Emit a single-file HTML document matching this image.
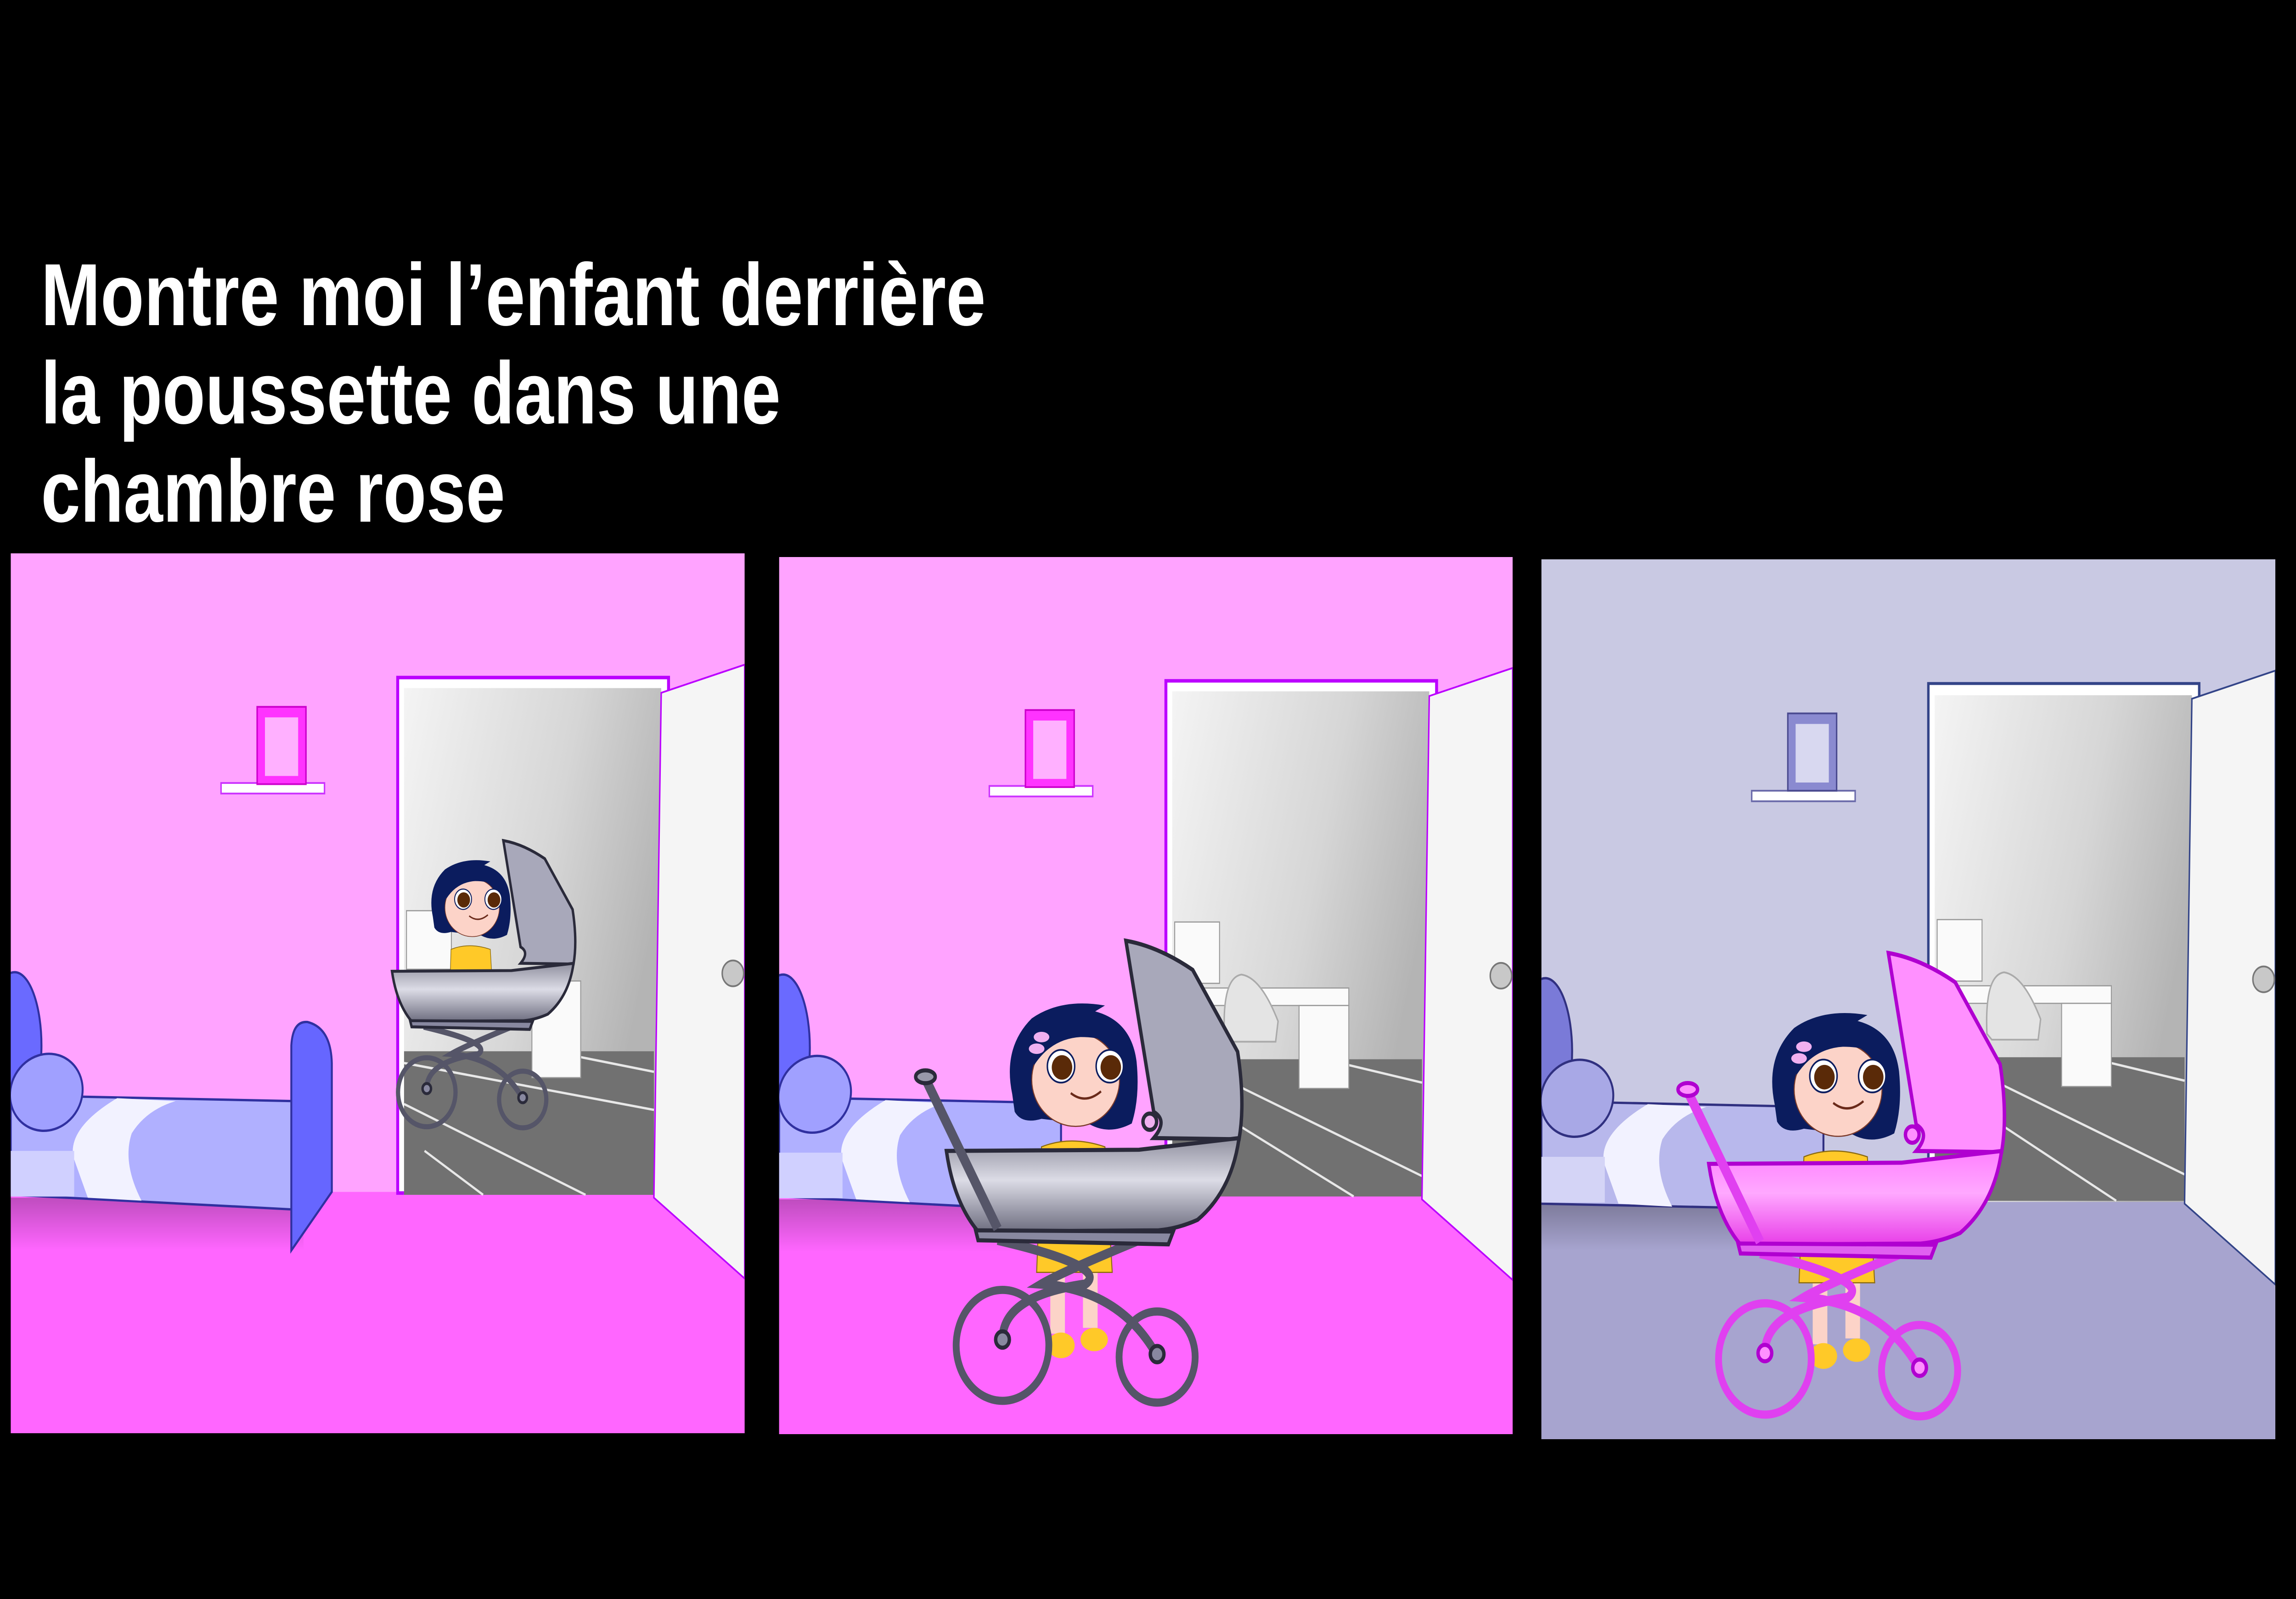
<!DOCTYPE html>
<html><head><meta charset="utf-8"><style>
html,body{margin:0;padding:0;background:#000;overflow:hidden;}
#root{display:block;width:100vw;height:100vh;}
</style></head><body>
<svg id="root" viewBox="0 0 6000 3482" preserveAspectRatio="none">
<defs>
<linearGradient id="room" x1="0" y1="0" x2="1" y2="0.4"><stop offset="0" stop-color="#f4f4f4"/><stop offset="0.6" stop-color="#d6d6d6"/><stop offset="1" stop-color="#b4b4b4"/></linearGradient>
<linearGradient id="gray" x1="0" y1="0" x2="0" y2="1"><stop offset="0" stop-color="#8f8f9e"/><stop offset="0.45" stop-color="#dcdce6"/><stop offset="1" stop-color="#6e6e80"/></linearGradient>
<linearGradient id="pink" x1="0" y1="0" x2="0" y2="1"><stop offset="0" stop-color="#ff80ff"/><stop offset="0.45" stop-color="#ffa8ff"/><stop offset="1" stop-color="#e83ee8"/></linearGradient>
<linearGradient id="shadow" x1="0" y1="0" x2="0" y2="1"><stop offset="0" stop-color="#000" stop-opacity="0.25"/><stop offset="1" stop-color="#000" stop-opacity="0"/></linearGradient>
</defs>
<rect width="6000" height="3482" fill="#000"/>
<g font-family="'Liberation Sans',sans-serif" font-weight="bold" font-size="192" fill="#fff">
<text x="107" y="708" textLength="2469" lengthAdjust="spacingAndGlyphs">Montre moi l’enfant derrière</text>
<text x="107" y="922" textLength="1933" lengthAdjust="spacingAndGlyphs">la poussette dans une</text>
<text x="107" y="1136" textLength="1213" lengthAdjust="spacingAndGlyphs">chambre rose</text>
</g>

<!-- PANEL 1 -->
<svg x="28" y="1205" width="1918" height="1916" viewBox="22 20 1504 1502" preserveAspectRatio="none">
<rect x="22" y="20" width="1504" height="1502" fill="#ffa3ff"/>
<polygon points="22,1110 1340,1110 1526,1258 1526,1522 22,1522" fill="#ff66ff"/>
<rect x="815" y="232" width="555" height="880" fill="#fff" stroke="#bb00ff" stroke-width="6"/>
<rect x="828" y="250" width="527" height="865" fill="url(#room)"/>
<polygon points="828,870 1340,870 1340,1115 828,1115" fill="#717171"/>
<g stroke="#e8e8e8" stroke-width="4"><line x1="828" y1="890" x2="1340" y2="970"/><line x1="828" y1="960" x2="1200" y2="1115"/><line x1="870" y1="1040" x2="990" y2="1115"/><line x1="1190" y1="880" x2="1340" y2="905"/></g>
<rect x="833" y="630" width="92" height="100" fill="#fafafa" stroke="#999" stroke-width="2"/>
<rect x="1090" y="750" width="100" height="165" fill="#fafafa" stroke="#999" stroke-width="2"/>
<polygon points="1355,258 1526,210 1526,1258 1340,1120" fill="#f5f5f5" stroke="#bb00ff" stroke-width="3"/>
<circle cx="1502" cy="737" r="22" fill="#c8c8c8" stroke="#777" stroke-width="3"/>
<rect x="453" y="412" width="212" height="18" fill="#fff" stroke="#cc33ff" stroke-width="3"/>
<rect x="527" y="282" width="100" height="132" fill="#ff33ff" stroke="#cc00cc" stroke-width="3"/>
<rect x="543" y="300" width="68" height="100" fill="#ffb0ff"/>
<rect x="22" y="1120" width="600" height="90" fill="url(#shadow)"/>
<ellipse cx="30" cy="860" rx="55" ry="125" fill="#6a6aff" stroke="#3030a0" stroke-width="4"/>
<polygon points="22,945 600,955 600,1140 22,1115" fill="#b0b0ff" stroke="#3030a0" stroke-width="4"/>
<path d="M240,950 Q140,1000 150,1050 L180,1120 L290,1125 Q250,1060 270,1010 Q300,970 360,955 Z" fill="#f2f2ff"/>
<rect x="22" y="1040" width="130" height="78" fill="#d0d0ff"/>
<ellipse cx="95" cy="940" rx="75" ry="65" fill="#a0a0ff" stroke="#3030a0" stroke-width="4" transform="rotate(-15 95 940)"/>
<path d="M597,1210 L597,860 Q600,818 630,820 Q678,830 680,890 L680,1110 Z" fill="#6666ff" stroke="#3030a0" stroke-width="4"/>
<g transform="translate(577,45) scale(0.62)">
<path d="M500,960 Q480,880 540,830 Q600,795 690,808 L670,818 Q745,835 755,905 Q762,965 745,1010 Q700,1030 660,1012 L560,1002 Q520,1012 505,990 Z" fill="#0b1c5e"/>
<path d="M560,1050 Q620,1030 690,1050 L700,1200 L555,1200 Z" fill="#ffc928" stroke="#8a6a10" stroke-width="2"/>
<ellipse cx="630" cy="935" rx="90" ry="80" fill="#fcd3c8" stroke="#7a3a2a" stroke-width="2"/>
<path d="M540,890 Q590,822 700,830 Q745,850 755,905 Q720,862 640,862 Q580,865 545,910 Z" fill="#0b1c5e"/>
<circle cx="600" cy="912" r="28" fill="#fff" stroke="#0b1c5e" stroke-width="3"/><circle cx="602" cy="914" r="21" fill="#5a2a08"/>
<circle cx="700" cy="912" r="28" fill="#fff" stroke="#0b1c5e" stroke-width="3"/><circle cx="702" cy="914" r="21" fill="#5a2a08"/>
<path d="M620,958 Q650,978 682,955" fill="none" stroke="#6a2a1a" stroke-width="4"/>
</g>
<g transform="translate(577,75) scale(0.62)" stroke="#2a2a3a" stroke-width="8">
<g fill="none" stroke="#555568" stroke-width="16"><path d="M470,1215 Q700,1260 650,1290 Q480,1310 480,1385"/><path d="M760,1215 Q600,1270 560,1290 Q720,1300 795,1410"/></g>
<circle cx="480" cy="1395" r="95" fill="none" stroke="#555568" stroke-width="14"/>
<circle cx="797" cy="1415" r="78" fill="none" stroke="#555568" stroke-width="14"/>
<circle cx="480" cy="1385" r="14" fill="#8888a0"/><circle cx="797" cy="1410" r="14" fill="#8888a0"/>
<path d="M733,702 Q800,712 870,752 L962,892 Q978,980 965,1042 L790,1040 Q820,1010 790,995 Z" fill="#a8a8ba"/>
<path d="M365,1062 L760,1060 L965,1040 Q950,1130 880,1180 Q840,1195 800,1198 L430,1200 Q380,1150 365,1062 Z" fill="url(#gray)"/>
<path d="M425,1198 L830,1200 L820,1222 L430,1215 Z" fill="#8888a0"/>
</g>
</svg>

<!-- PANEL 2 -->
<svg x="2036" y="1213" width="1917" height="1910" viewBox="22 20 1504 1502" preserveAspectRatio="none">
<rect x="22" y="20" width="1504" height="1502" fill="#ffa3ff"/>
<polygon points="22,1110 1340,1110 1526,1258 1526,1522 22,1522" fill="#ff66ff"/>
<rect x="815" y="232" width="555" height="880" fill="#fff" stroke="#bb00ff" stroke-width="6"/>
<rect x="828" y="250" width="527" height="865" fill="url(#room)"/>
<polygon points="828,880 1340,880 1340,1115 828,1115" fill="#717171"/>
<g stroke="#e8e8e8" stroke-width="4"><line x1="900" y1="900" x2="1340" y2="1080"/><line x1="900" y1="960" x2="1200" y2="1115"/><line x1="1190" y1="890" x2="1340" y2="920"/></g>
<rect x="833" y="645" width="92" height="105" fill="#fafafa" stroke="#999" stroke-width="2"/>
<rect x="870" y="758" width="320" height="30" fill="#fafafa" stroke="#999" stroke-width="2"/>
<rect x="1088" y="788" width="102" height="142" fill="#fafafa" stroke="#999" stroke-width="2"/>
<path d="M935,840 Q930,740 970,735 Q1010,740 1045,815 L1040,850 L945,850 Z" fill="#e4e4e4" stroke="#aaa" stroke-width="3"/>
<polygon points="1355,258 1526,210 1526,1258 1340,1120" fill="#f5f5f5" stroke="#bb00ff" stroke-width="3"/>
<circle cx="1502" cy="737" r="22" fill="#c8c8c8" stroke="#777" stroke-width="3"/>
<rect x="453" y="412" width="212" height="18" fill="#fff" stroke="#cc33ff" stroke-width="3"/>
<rect x="527" y="282" width="100" height="132" fill="#ff33ff" stroke="#cc00cc" stroke-width="3"/>
<rect x="543" y="300" width="68" height="100" fill="#ffb0ff"/>
<rect x="22" y="1120" width="600" height="90" fill="url(#shadow)"/>
<ellipse cx="30" cy="860" rx="55" ry="125" fill="#6a6aff" stroke="#3030a0" stroke-width="4"/>
<polygon points="22,945 600,955 600,1140 22,1115" fill="#b0b0ff" stroke="#3030a0" stroke-width="4"/>
<path d="M240,950 Q140,1000 150,1050 L180,1120 L290,1125 Q250,1060 270,1010 Q300,970 360,955 Z" fill="#f2f2ff"/>
<rect x="22" y="1040" width="130" height="78" fill="#d0d0ff"/>
<ellipse cx="95" cy="940" rx="75" ry="65" fill="#a0a0ff" stroke="#3030a0" stroke-width="4" transform="rotate(-15 95 940)"/>
<g transform="translate(0,-20)">
<path d="M500,960 Q480,880 540,830 Q600,795 690,808 L670,818 Q745,835 755,905 Q762,965 745,1010 Q700,1030 660,1012 L560,1002 Q520,1012 505,990 Z" fill="#0b1c5e"/>
<rect x="578" y="1240" width="30" height="130" fill="#fcd3c8"/><rect x="645" y="1240" width="30" height="120" fill="#fcd3c8"/>
<ellipse cx="600" cy="1390" rx="28" ry="22" fill="#ffc928"/><ellipse cx="668" cy="1380" rx="28" ry="20" fill="#ffc928"/>
<path d="M560,1050 Q620,1030 690,1050 L705,1265 L550,1265 Z" fill="#ffc928" stroke="#8a6a10" stroke-width="2"/>
<ellipse cx="630" cy="935" rx="90" ry="80" fill="#fcd3c8" stroke="#7a3a2a" stroke-width="2"/>
<path d="M540,890 Q590,822 700,830 Q745,850 755,905 Q720,862 640,862 Q580,865 545,910 Z" fill="#0b1c5e"/>
<circle cx="600" cy="912" r="28" fill="#fff" stroke="#0b1c5e" stroke-width="3"/><circle cx="602" cy="914" r="21" fill="#5a2a08"/>
<circle cx="700" cy="912" r="28" fill="#fff" stroke="#0b1c5e" stroke-width="3"/><circle cx="702" cy="914" r="21" fill="#5a2a08"/>
<path d="M620,958 Q650,978 682,955" fill="none" stroke="#6a2a1a" stroke-width="4"/>
<ellipse cx="560" cy="862" rx="16" ry="9" fill="#f0b0f0"/><ellipse cx="550" cy="882" rx="16" ry="9" fill="#f0b0f0"/>
</g>
<g stroke="#2a2a3a" stroke-width="7" transform="translate(0,-25)">
<g fill="none" stroke="#555568" stroke-width="16"><path d="M470,1215 Q700,1260 650,1290 Q480,1310 480,1385"/><path d="M760,1215 Q600,1270 560,1290 Q720,1300 795,1410"/></g>
<circle cx="480" cy="1395" r="95" fill="none" stroke="#555568" stroke-width="14"/>
<circle cx="797" cy="1415" r="78" fill="none" stroke="#555568" stroke-width="14"/>
<circle cx="480" cy="1385" r="14" fill="#8888a0"/><circle cx="797" cy="1410" r="14" fill="#8888a0"/>
<path d="M733,702 Q800,712 870,752 L962,892 Q978,980 965,1042 L790,1040 Q820,1010 790,995 Z" fill="#a8a8ba"/>
<circle cx="782" cy="1012" r="14" fill="#f0b0f0"/>
<path d="M365,1062 L760,1060 L965,1040 Q950,1130 880,1180 Q840,1195 800,1198 L430,1200 Q380,1150 365,1062 Z" fill="url(#gray)"/>
<path d="M425,1198 L830,1200 L820,1222 L430,1215 Z" fill="#8888a0"/>
<line x1="320" y1="935" x2="470" y2="1195" stroke="#555568" stroke-width="18"/>
<ellipse cx="322" cy="935" rx="20" ry="11" fill="#9898aa"/>
</g>
</svg>

<!-- PANEL 3 -->
<svg x="4028" y="1218" width="1918" height="1916" viewBox="22 30 1504 1502" preserveAspectRatio="none">
<rect x="22" y="30" width="1504" height="1502" fill="#c9c9e3"/>
<polygon points="22,1125 1340,1125 1526,1268 1526,1532 22,1532" fill="#a7a4cf"/>
<rect x="815" y="242" width="555" height="880" fill="#fff" stroke="#334488" stroke-width="5"/>
<rect x="828" y="262" width="527" height="865" fill="url(#room)"/>
<polygon points="828,880 1340,880 1340,1125 828,1125" fill="#717171"/>
<g stroke="#e8e8e8" stroke-width="4"><line x1="900" y1="900" x2="1340" y2="1080"/><line x1="900" y1="960" x2="1200" y2="1125"/><line x1="1190" y1="890" x2="1340" y2="920"/></g>
<rect x="833" y="645" width="92" height="105" fill="#fafafa" stroke="#999" stroke-width="2"/>
<rect x="870" y="758" width="320" height="30" fill="#fafafa" stroke="#999" stroke-width="2"/>
<rect x="1088" y="788" width="102" height="142" fill="#fafafa" stroke="#999" stroke-width="2"/>
<path d="M935,840 Q930,740 970,735 Q1010,740 1045,815 L1040,850 L945,850 Z" fill="#e4e4e4" stroke="#aaa" stroke-width="3"/>
<polygon points="1355,268 1526,220 1526,1268 1340,1130" fill="#f5f5f5" stroke="#334488" stroke-width="3"/>
<circle cx="1502" cy="747" r="22" fill="#c8c8c8" stroke="#777" stroke-width="3"/>
<rect x="453" y="425" width="212" height="18" fill="#fff" stroke="#6a6aaa" stroke-width="3"/>
<rect x="527" y="293" width="100" height="132" fill="#8a8ad0" stroke="#4a4a90" stroke-width="3"/>
<rect x="543" y="311" width="68" height="100" fill="#d8d8f0"/>
<rect x="22" y="1130" width="600" height="80" fill="url(#shadow)"/>
<ellipse cx="30" cy="870" rx="55" ry="125" fill="#7a7ad8" stroke="#303080" stroke-width="4"/>
<polygon points="22,955 600,965 600,1140 22,1130" fill="#b8b8ec" stroke="#303080" stroke-width="4"/>
<path d="M240,960 Q140,1010 150,1060 L180,1130 L290,1135 Q250,1070 270,1020 Q300,980 360,965 Z" fill="#f2f2ff"/>
<rect x="22" y="1050" width="130" height="78" fill="#d4d4f6"/>
<ellipse cx="95" cy="950" rx="75" ry="65" fill="#a8a8e6" stroke="#303080" stroke-width="4" transform="rotate(-15 95 950)"/>
<g>
<path d="M500,960 Q480,880 540,830 Q600,795 690,808 L670,818 Q745,835 755,905 Q762,965 745,1010 Q700,1030 660,1012 L560,1002 Q520,1012 505,990 Z" fill="#0b1c5e"/>
<rect x="578" y="1240" width="30" height="130" fill="#fcd3c8"/><rect x="645" y="1240" width="30" height="120" fill="#fcd3c8"/>
<ellipse cx="600" cy="1390" rx="28" ry="22" fill="#ffc928"/><ellipse cx="668" cy="1380" rx="28" ry="20" fill="#ffc928"/>
<path d="M560,1050 Q620,1030 690,1050 L705,1265 L550,1265 Z" fill="#ffc928" stroke="#8a6a10" stroke-width="2"/>
<ellipse cx="630" cy="935" rx="90" ry="80" fill="#fcd3c8" stroke="#7a3a2a" stroke-width="2"/>
<path d="M540,890 Q590,822 700,830 Q745,850 755,905 Q720,862 640,862 Q580,865 545,910 Z" fill="#0b1c5e"/>
<circle cx="600" cy="912" r="28" fill="#fff" stroke="#0b1c5e" stroke-width="3"/><circle cx="602" cy="914" r="21" fill="#5a2a08"/>
<circle cx="700" cy="912" r="28" fill="#fff" stroke="#0b1c5e" stroke-width="3"/><circle cx="702" cy="914" r="21" fill="#5a2a08"/>
<path d="M620,958 Q650,978 682,955" fill="none" stroke="#6a2a1a" stroke-width="4"/>
<ellipse cx="560" cy="862" rx="16" ry="9" fill="#f0b0f0"/><ellipse cx="550" cy="882" rx="16" ry="9" fill="#f0b0f0"/>
</g>
<g stroke="#b000d0" stroke-width="7">
<g fill="none" stroke="#e040f0" stroke-width="16"><path d="M470,1215 Q700,1260 650,1290 Q480,1310 480,1385"/><path d="M760,1215 Q600,1270 560,1290 Q720,1300 795,1410"/></g>
<circle cx="480" cy="1395" r="95" fill="none" stroke="#e040f0" stroke-width="14"/>
<circle cx="797" cy="1415" r="78" fill="none" stroke="#e040f0" stroke-width="14"/>
<circle cx="480" cy="1385" r="14" fill="#ff90ff"/><circle cx="797" cy="1410" r="14" fill="#ff90ff"/>
<path d="M733,702 Q800,712 870,752 L962,892 Q978,980 965,1042 L790,1040 Q820,1010 790,995 Z" fill="#ff90ff"/>
<circle cx="782" cy="1012" r="14" fill="#ff90ff"/>
<path d="M365,1062 L760,1060 L965,1040 Q950,1130 880,1180 Q840,1195 800,1198 L430,1200 Q380,1150 365,1062 Z" fill="url(#pink)"/>
<path d="M425,1198 L830,1200 L820,1222 L430,1215 Z" fill="#e060f0"/>
<line x1="320" y1="935" x2="470" y2="1195" stroke="#e040f0" stroke-width="18"/>
<ellipse cx="322" cy="935" rx="20" ry="11" fill="#ff90ff"/>
</g>
</svg>
</svg>
</body></html>
